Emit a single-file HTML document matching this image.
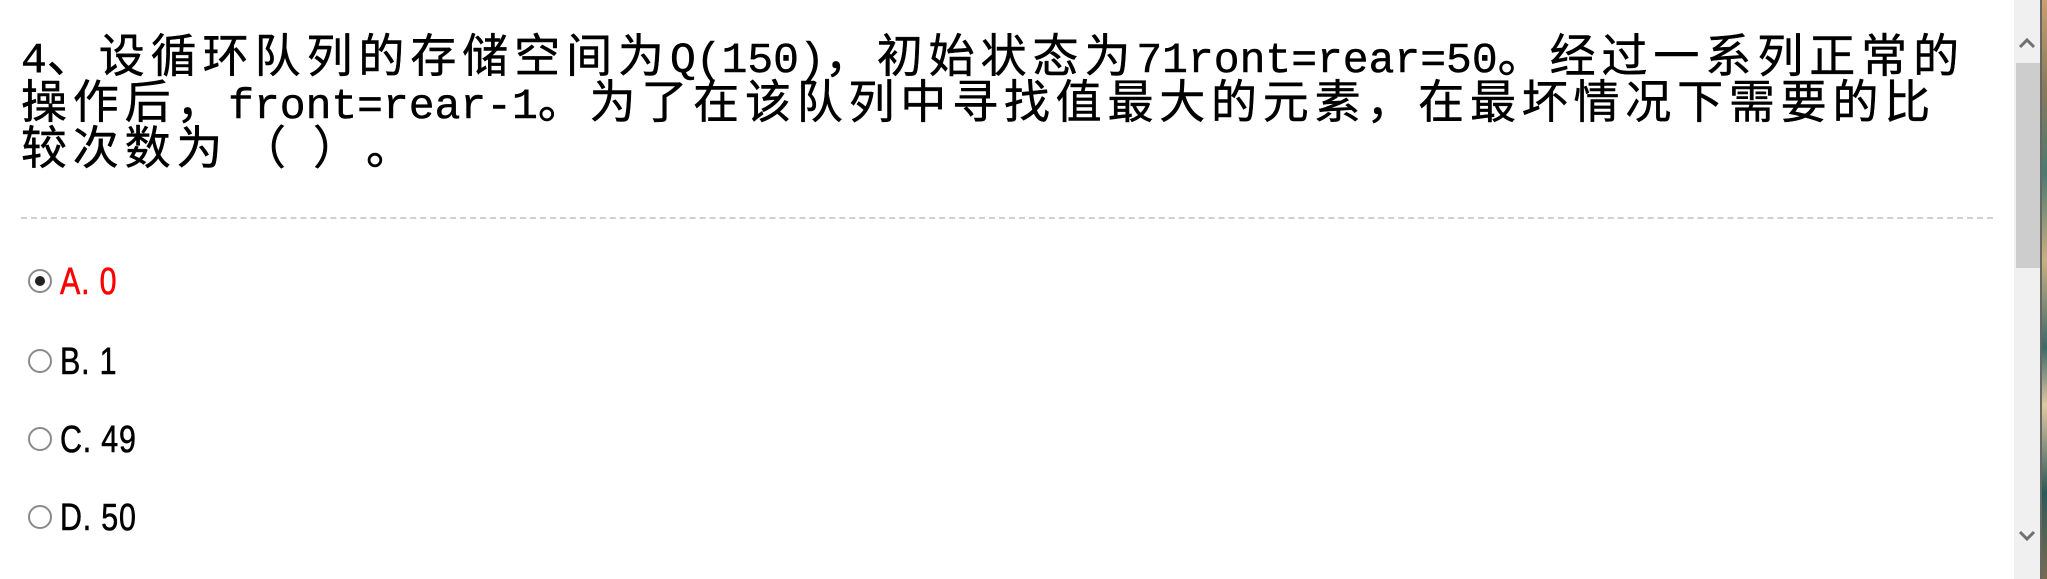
<!DOCTYPE html>
<html><head><meta charset="utf-8"><style>
html,body{margin:0;padding:0;background:#fff;width:2047px;height:579px;overflow:hidden;position:relative}
.q{position:absolute;left:21px;font-family:"WenQuanYi Zen Hei","Noto Sans CJK SC",sans-serif;font-size:46px;color:#000;white-space:nowrap;line-height:46px;-webkit-text-stroke:0.5px #000}
.q .l{font-family:"Liberation Mono",monospace;font-size:43px;letter-spacing:0}
.dash{position:absolute;left:21px;top:217px;width:1972px;height:0;border-top:2px dashed #d0d0d0}
.opt{position:absolute;left:27px;height:30px;font-family:"Liberation Sans",sans-serif;font-size:38px;line-height:30px;white-space:nowrap}
.opt .r{position:absolute;left:1px;top:2px;width:24px;height:24px;border:2px solid #8a8a8a;border-radius:50%;box-sizing:border-box;background:#fff}
.opt .r.on::after{content:"";position:absolute;left:5px;top:5px;width:10px;height:10px;border-radius:50%;background:#222}
.opt span.t{position:absolute;left:33px;top:0;display:inline-block;transform:scaleX(0.8);transform-origin:left center;letter-spacing:1px;-webkit-text-stroke:0.6px currentColor}
.sb{position:absolute;left:2014px;top:0;width:26px;height:579px;background:#f0f0f0}
.th{position:absolute;left:2016px;top:63px;width:24px;height:205px;background:#cdcdcd}
.edge{position:absolute;left:2040px;top:0;width:7px;height:579px;background:linear-gradient(#c9a070,#8a7a5a 15%,#4a7a70 30%,#c9b080 45%,#3a6a68 60%,#e0c8a0 70%,#2a5a58 85%,#7a6a50)}
.ed2{position:absolute;left:2040px;top:0;width:2px;height:579px;background:#666}
</style></head><body>
<div class="q" id="l1" style="top:30px" data-w="1944"><span class="l">4</span>、设循环队列的存储空间为<span class="l">Q(150)</span>，初始状态为<span class="l">71ront=rear=50</span>。经过一系列正常的</div>
<div class="q" id="l2" style="top:76px" data-w="1915">操作后，<span class="l">front=rear-1</span>。为了在该队列中寻找值最大的元素，在最坏情况下需要的比</div>
<div class="q" id="l3" style="top:122px">较次数为<span style="position:absolute;left:219px;letter-spacing:0">（</span><span style="position:absolute;left:292px;letter-spacing:0">）</span><span style="position:absolute;left:345px;letter-spacing:0">。</span></div>
<div class="dash"></div>
<div class="opt" style="top:267px;color:#f00"><div class="r on"></div><span class="t">A. 0</span></div>
<div class="opt" style="top:347px;color:#000"><div class="r"></div><span class="t">B. 1</span></div>
<div class="opt" style="top:425px;color:#000"><div class="r"></div><span class="t">C. 49</span></div>
<div class="opt" style="top:503px;color:#000"><div class="r"></div><span class="t">D. 50</span></div>
<div class="sb"></div>
<div class="th"></div>
<svg style="position:absolute;left:2014px;top:0" width="26" height="579">
<polyline points="6,47 13,40 20,47" fill="none" stroke="#707070" stroke-width="3"/>
<polyline points="6,532 13,539 20,532" fill="none" stroke="#707070" stroke-width="3"/>
</svg>
<div class="edge"></div><div class="ed2"></div>
<script>
var ls=6;
['l1','l2'].forEach(function(id){var e=document.getElementById(id);e.style.letterSpacing='0px';var w=+e.getAttribute('data-w');var total=e.textContent.length;var lat=0;e.querySelectorAll('.l').forEach(function(s){lat+=s.textContent.length;});var n=total-lat;var nat=e.getBoundingClientRect().width;var s=(w-nat)/n;if(s<0)s=0;e.style.letterSpacing=s+'px';ls=s;});
document.getElementById('l3').style.letterSpacing=ls+'px';
</script>
</body></html>
